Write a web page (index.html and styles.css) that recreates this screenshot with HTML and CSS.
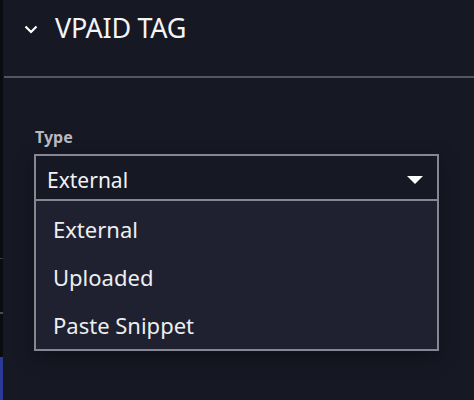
FILE: index.html
```html
<!DOCTYPE html>
<html lang="en">
<head>
  <meta charset="UTF-8" />
  <title>VPAID Tag</title>
  <link rel="stylesheet" href="styles.css">
</head>
<body>
  <div class="edge">
    <div class="edge-top"></div>
    <div class="edge-mid"></div>
    <div class="edge-blue"></div>
  </div>

  <div class="panel">
    <div class="panel-head">
      <svg class="chevron" width="14" height="9" viewBox="0 0 14 9">
        <path d="M1.5 1.5 L7 7 L12.5 1.5" fill="none" stroke="#fff" stroke-width="2.2"/>
      </svg>
      <h2>VPAID TAG</h2>
    </div>

    <div class="panel-body">
      <label class="field-label">Type</label>
      <div class="select">
        <div class="select-value">
          <span>External</span>
          <span class="caret"></span>
        </div>
        <ul class="options">
          <li>External</li>
          <li>Uploaded</li>
          <li>Paste Snippet</li>
        </ul>
      </div>
    </div>
  </div>
</body>
</html>
```

FILE: styles.css
```css
html, body {
  height: 100%;
}
body {
  margin: 0;
  display: flex;
  background: #161824;
  font-family: 'Noto Sans', 'Open Sans', sans-serif;
  color: #f2f2f4;
  overflow: hidden;
}
.edge {
  width: 3px;
  display: flex;
  flex-direction: column;
  background: #0b0c11;
}
.edge-top {
  height: 258px;
  border-bottom: 1px solid #3a3b45;
}
.edge-mid {
  height: 98px;
  border-top: 54px solid #0b0c11;
  box-sizing: border-box;
  background: #0b0c11;
  position: relative;
}
.edge-mid::before {
  content: '';
  position: absolute;
  left: 0;
  top: -1px;
  width: 3px;
  height: 2px;
  background: #4a4b55;
}
.edge-blue {
  flex: 1;
  background: #2a3a96;
}
.panel {
  flex: 1;
  padding-left: 1px;
}
.panel-head {
  height: 78px;
  display: flex;
  align-items: center;
  border-bottom: 2px solid #575462;
  box-sizing: border-box;
  padding-left: 20px;
  padding-bottom: 22px;
}
.panel-head h2 {
  margin: 0 0 0 17px;
  font-size: 27px;
  font-weight: 400;
  letter-spacing: -0.3px;
  color: #f4f4f6;
}
.chevron {
  margin-top: 4px;
}
.panel-body {
  padding: 48px 0 0 30px;
}
.field-label {
  display: block;
  font-size: 16px;
  font-weight: 700;
  color: #b9b9c1;
  margin-left: 1px;
  margin-bottom: 6px;
  line-height: 22px;
}
.select {
  width: 405px;
  border: 2px solid #878793;
  box-sizing: border-box;
  box-shadow: 0 6px 18px rgba(0, 0, 0, 0.35);
}
.select-value {
  height: 45px;
  display: flex;
  align-items: center;
  justify-content: space-between;
  padding: 4px 14px 0 11px;
  box-sizing: border-box;
  font-size: 21px;
  border-bottom: 2px solid #878793;
}
.caret {
  width: 0;
  height: 0;
  border-left: 8px solid transparent;
  border-right: 8px solid transparent;
  border-top: 8px solid #fff;
  margin-top: 0;
}
.options {
  list-style: none;
  margin: 0;
  padding: 4px 0 0;
  background: #1f2130;
}
.options li {
  height: 48px;
  line-height: 48px;
  padding-left: 17px;
  font-size: 22px;
  color: #eeeef1;
}
```
